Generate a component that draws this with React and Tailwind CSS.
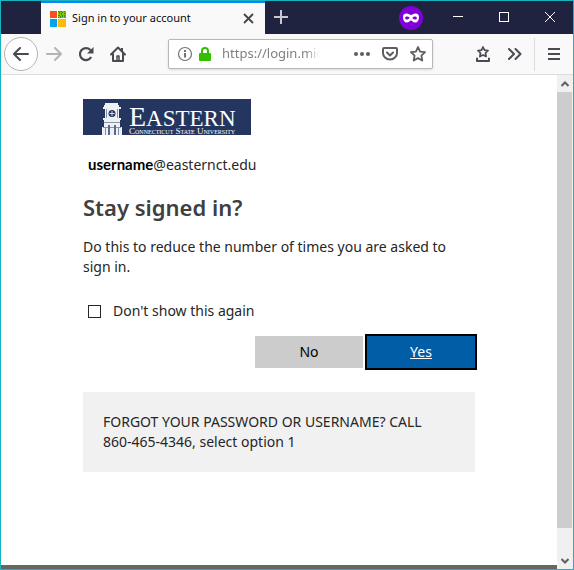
import { useState } from "react"

function ToolbarButton({ label, className = "", children }) {
  return (
    <button
      type="button"
      aria-label={label}
      title={label}
      className={`flex h-8 shrink-0 items-center justify-center text-[#4a4a50] ${className}`}
    >
      {children}
    </button>
  )
}

function WindowButton({ label, children }) {
  return (
    <button type="button" aria-label={label} className="flex h-8 w-[46px] items-center justify-center">
      <svg width="12" height="12" viewBox="0 0 12 12" fill="none" stroke="#fff" shapeRendering="crispEdges">
        {children}
      </svg>
    </button>
  )
}

function MicrosoftLogo() {
  return (
    <svg width="16" height="16" viewBox="0 0 16 16" className="shrink-0" shapeRendering="crispEdges">
      <path fill="#f8501c" d="M0 0h7v7H0z" />
      <path fill="#8cc800" d="M8 0h8v7H8z" />
      <path
        fill="#2c8c10"
        d="M8 0h1v1H8zM10 0h2v1h-2zM14 0h1v1h-1zM9 1h1v2H9zM12 1h1v1h-1zM14 2h2v1h-2zM11 2h1v2h-1zM8 4h2v1H8zM12 4h1v2h-1zM14 4h1v2h-1zM10 5h1v2h-1zM8 6h1v1H8zM15 6h1v1h-1z"
      />
      <path fill="#00a3f0" d="M0 8h7v8H0z" />
      <path fill="#ffba08" d="M8 8h8v8H8z" />
    </svg>
  )
}

function TitleBar() {
  return (
    <header className="flex h-[33px] shrink-0 bg-[#202340] pl-10">
      <div className="flex w-[224px] items-center border-t-2 border-[#0a84ff] bg-[#f9f9fa] pr-[7px] pl-[9px]">
        <MicrosoftLogo />
        <span className="ml-[6px] flex-1 font-['Noto_Sans',sans-serif] text-[11px] whitespace-nowrap text-[#0c0c0d]">
          Sign in to your account
        </span>
        <button type="button" aria-label="Close tab" className="flex h-5 w-5 items-center justify-center">
          <svg width="11" height="11" viewBox="0 0 11 11" stroke="#45454b" strokeWidth="1.8">
            <path d="M1 1l9 9M10 1l-9 9" />
          </svg>
        </button>
      </div>
      <button type="button" aria-label="New tab" className="flex h-8 w-8 items-center justify-center">
        <svg width="14" height="14" viewBox="0 0 14 14" stroke="#c8c8d0" strokeWidth="2">
          <path d="M7 0v14M0 7h14" />
        </svg>
      </button>
      <div className="ml-auto flex">
        <svg width="24" height="24" viewBox="0 0 24 24" className="mt-[5px] mr-3">
          <circle cx="12" cy="12" r="12" fill="#8000d7" />
          <path
            fill="#fff"
            fillRule="evenodd"
            d="M7.5 7.5C10 7.5 10.700 9 12 9s2-1.500 4.500-1.500C19 7.500 20 9 20 11c0 3.500-1.500 5.500-3.700 5.500-2.500 0-3-2-4.300-2s-1.800 2-4.300 2C5.500 16.500 4 14.500 4 11c0-2 1-3.500 3.500-3.500zM8.200 10.500c-1.200 0-2.200.7-2.200 1.400 0 .8 1 1.500 2.200 1.500s2.300-.8 2.300-1.300c0-.6-1-1.600-2.300-1.600zm7.600 0c-1.300 0-2.300 1-2.300 1.600 0 .5 1.100 1.300 2.300 1.300S18 12.700 18 11.900c0-.7-1-1.400-2.200-1.400z"
          />
        </svg>
        <WindowButton label="Minimize">
          <path d="M1 5.500h10" />
        </WindowButton>
        <WindowButton label="Maximize">
          <path d="M1.500 1.500h9v9h-9z" />
        </WindowButton>
        <WindowButton label="Close">
          <path shapeRendering="auto" d="M1 1l10 10M11 1L1 11" />
        </WindowButton>
      </div>
    </header>
  )
}

function AddressBar() {
  return (
    <div className="flex h-[30px] min-w-0 flex-1 items-center rounded-[2px] border border-[#b8b8bc] bg-white pl-2 shadow-sm">
      <svg width="16" height="16" viewBox="0 0 16 16" fill="none" stroke="#737378" className="shrink-0">
        <circle cx="8" cy="8" r="6.500" strokeWidth="1.200" />
        <path strokeWidth="2" d="M8 7v4.500M8 4v2" />
      </svg>
      <svg width="12" height="14" viewBox="0 0 12 14" className="ml-[6px] shrink-0">
        <path fill="none" stroke="#30c000" strokeWidth="2" d="M3 6V4a3 3 0 0 1 6 0v2" />
        <rect y="6" width="12" height="8" rx="1" fill="#30c000" />
      </svg>
      <input
        type="text"
        aria-label="Address"
        defaultValue="https://login.microsoftonline.com"
        className="ml-[11px] w-0 min-w-0 flex-1 mask-r-from-85% font-['Noto_Sans',sans-serif] text-[13px] text-[#808085] outline-none"
      />
      <div className="ml-7 flex shrink-0">
        <ToolbarButton label="Page actions" className="w-7">
          <svg width="16" height="16" viewBox="0 0 16 16" fill="#5d5d62">
            <circle cx="2" cy="8" r="2" />
            <circle cx="8" cy="8" r="2" />
            <circle cx="14" cy="8" r="2" />
          </svg>
        </ToolbarButton>
        <ToolbarButton label="Save to Pocket" className="w-7">
          <svg width="16" height="16" viewBox="0 0 16 16" fill="none" stroke="#5d5d62" strokeWidth="2" strokeLinecap="round" strokeLinejoin="round">
            <path d="M2 2h12a1 1 0 0 1 1 1v4a7 6.500 0 0 1-14 0V3a1 1 0 0 1 1-1z" />
            <path d="M5 6.500l3 3 3-3" />
          </svg>
        </ToolbarButton>
        <ToolbarButton label="Bookmark this page" className="w-7">
          <svg width="16" height="16" viewBox="0 0 16 16" fill="none" stroke="#5d5d62" strokeWidth="1.800" strokeLinejoin="round">
            <path d="M8 1l2.100 4.600 4.900.6-3.600 3.400.9 4.900L8 12.100l-4.300 2.400.9-4.900L1 6.200l4.900-.6z" />
          </svg>
        </ToolbarButton>
      </div>
    </div>
  )
}

function Toolbar() {
  return (
    <nav className="flex h-[41px] shrink-0 items-center border-b border-[#dcdcde] bg-[#f9f9fa] pl-[3px]">
      <button
        type="button"
        aria-label="Back"
        title="Back"
        className="flex h-[34px] w-[34px] shrink-0 items-center justify-center rounded-full border border-[#b4b4b8] bg-white text-[#4a4a50]"
      >
        <svg width="16" height="16" viewBox="0 0 16 16" fill="none" stroke="currentColor" strokeWidth="2" strokeLinecap="round" strokeLinejoin="round">
          <path d="M15 8H1M7 2L1 8l6 6" />
        </svg>
      </button>
      <ToolbarButton label="Forward" className="w-8">
        <svg width="16" height="16" viewBox="0 0 16 16" fill="none" stroke="#b4b4b8" strokeWidth="2" strokeLinecap="round" strokeLinejoin="round">
          <path d="M1 8h14M9 2l6 6-6 6" />
        </svg>
      </ToolbarButton>
      <ToolbarButton label="Reload" className="w-8">
        <svg width="16" height="16" viewBox="0 0 16 16" fill="none" stroke="currentColor" strokeWidth="2.200">
          <path d="M13.200 11a6 6 0 1 1-1-7.200L14 5.500" />
          <path fill="currentColor" stroke="none" d="M15.500 1v6.500H9z" />
        </svg>
      </ToolbarButton>
      <ToolbarButton label="Home" className="w-8">
        <svg width="16" height="16" viewBox="0 0 16 16" fill="none" stroke="currentColor" strokeWidth="2" strokeLinecap="round" strokeLinejoin="round">
          <path d="M1 8.500L8 1.500l7 7M3 8v7h10V8" />
          <path strokeWidth="1.500" d="M7 14v-4h2v4" />
          <path fill="currentColor" stroke="none" d="M11 2h2v4l-2-2z" />
        </svg>
      </ToolbarButton>
      <div className="ml-[34px] flex min-w-0 flex-1">
        <AddressBar />
      </div>
      <div className="ml-[34px] flex shrink-0 items-center">
        <ToolbarButton label="Bookmarks menu" className="w-8">
          <svg width="16" height="16" viewBox="0 0 16 16" fill="none" stroke="currentColor" strokeWidth="1.700" strokeLinejoin="round">
            <path d="M8 1l1.500 3.100 3.500.5-2.500 2.400.6 3.500L8 8.900l-3.100 1.600.6-3.500L3 4.600l3.500-.5z" />
            <path strokeWidth="2" strokeLinecap="round" d="M2 12.500V15h12v-2.500" />
          </svg>
        </ToolbarButton>
        <ToolbarButton label="More tools" className="w-8">
          <svg width="16" height="16" viewBox="0 0 16 16" fill="none" stroke="currentColor" strokeWidth="2" strokeLinecap="round" strokeLinejoin="round">
            <path d="M2 3l5 5-5 5M8.500 3l5 5-5 5" />
          </svg>
        </ToolbarButton>
        <div className="ml-[3px] h-[33px] w-px bg-[#dcdcde]" />
        <ToolbarButton label="Open menu" className="mr-[3px] ml-[3px] w-8">
          <svg width="12" height="12" viewBox="0 0 12 12" fill="currentColor">
            <path d="M0 0h12v2H0zM0 5h12v2H0zM0 10h12v2H0z" />
          </svg>
        </ToolbarButton>
      </div>
    </nav>
  )
}

function EasternLogo() {
  return (
    <svg width="168" height="36" viewBox="0 0 168 36" role="img" aria-label="Eastern Connecticut State University">
      <path fill="#24365f" d="M0 0h168v36H0z" />
      {/* clock tower */}
      <path
        fill="#eef0f4"
        d="M22 4h13v2H22zM21 6h15v2H21zM20 8h18v2H20zM22 10h14v9H22zM20 19h18v2H20zM21 21h16v7H21zM19 28h20v8H19z"
      />
      <circle cx="29" cy="14.500" r="3.500" fill="#24365f" />
      <path stroke="#d8dce6" d="M29 12v5M26.500 14.500h5" fill="none" />
      <path stroke="#8791aa" fill="none" d="M23.500 10v9M34.500 10v9M21 23.500h16M20 28.500h18M22.500 29v7M35.500 29v7" />
      <path stroke="#5c6b8d" fill="none" strokeWidth="2" d="M26 26v10M32 26v10" />
      <g fill="#fff" className="font-['Liberation_Serif',serif]">
        <text x="46" y="27">
          <tspan fontSize="28">E</tspan>
          <tspan fontSize="23">ASTERN</tspan>
        </text>
        <text x="46" y="35" className="text-[9px] [font-variant-caps:small-caps]">
          Connecticut State University
        </text>
      </g>
    </svg>
  )
}

function SignInPage() {
  const [dontShow, setDontShow] = useState(false)

  return (
    <main className="flex min-w-0 flex-1 flex-col bg-white font-['Noto_Sans',sans-serif] text-[14px] leading-5 text-[#262626]">
      <div className="mx-auto w-full max-w-[392px] flex-1 pt-6">
        <EasternLogo />
        <div className="mt-[19px] flex items-baseline pl-[5px]">
          <span className="font-['Lato',sans-serif] text-[15px] font-bold text-black">username</span>
          <span>@easternct.edu</span>
        </div>
        <h1 className="mt-4 text-[22px] leading-8 font-semibold text-[#404040]">Stay signed in?</h1>
        <p className="mt-[14px]">Do this to reduce the number of times you are asked to sign in.</p>
        <label className="mt-6 flex items-center pl-[5px]">
          <input
            type="checkbox"
            checked={dontShow}
            onChange={(e) => setDontShow(e.target.checked)}
            className="h-[13px] w-[13px] appearance-none border border-[#262626] bg-white checked:bg-[#005da6]"
          />
          <span className="ml-3">Don't show this again</span>
        </label>
        <div className="mt-[15px] flex justify-end gap-1">
          <button type="button" className="h-8 w-[108px] bg-[#cccccc] text-black">
            No
          </button>
          <button type="button" className="h-8 w-[108px] bg-[#005da6] text-white underline outline-2 outline-black">
            Yes
          </button>
        </div>
        <div className="mt-6 bg-[#f1f1f1] p-5">
          FORGOT YOUR PASSWORD OR USERNAME? CALL{" "}
          <span className="whitespace-nowrap">860-465-4346</span>, select option 1
        </div>
      </div>
      <footer className="h-1 bg-[#666666]" />
    </main>
  )
}

function Scrollbar() {
  return (
    <div className="flex w-4 shrink-0 flex-col bg-[#f0f0f0] pr-px">
      <div className="flex h-[17px] items-center justify-center">
        <svg width="8" height="6" viewBox="0 0 8 6" fill="none" stroke="#606060" strokeWidth="2">
          <path d="M.5 5L4 1.500 7.500 5" />
        </svg>
      </div>
      <div className="flex-1 bg-[#cdcdcd]" />
      <div className="flex h-[41px] items-end justify-center pb-[5px]">
        <svg width="8" height="6" viewBox="0 0 8 6" fill="none" stroke="#606060" strokeWidth="2">
          <path d="M.5 1L4 4.500 7.500 1" />
        </svg>
      </div>
    </div>
  )
}

export default function App() {
  return (
    <div className="flex min-h-screen flex-col border border-[#16b3c0]">
      <TitleBar />
      <Toolbar />
      <div className="flex flex-1">
        <SignInPage />
        <Scrollbar />
      </div>
    </div>
  )
}
